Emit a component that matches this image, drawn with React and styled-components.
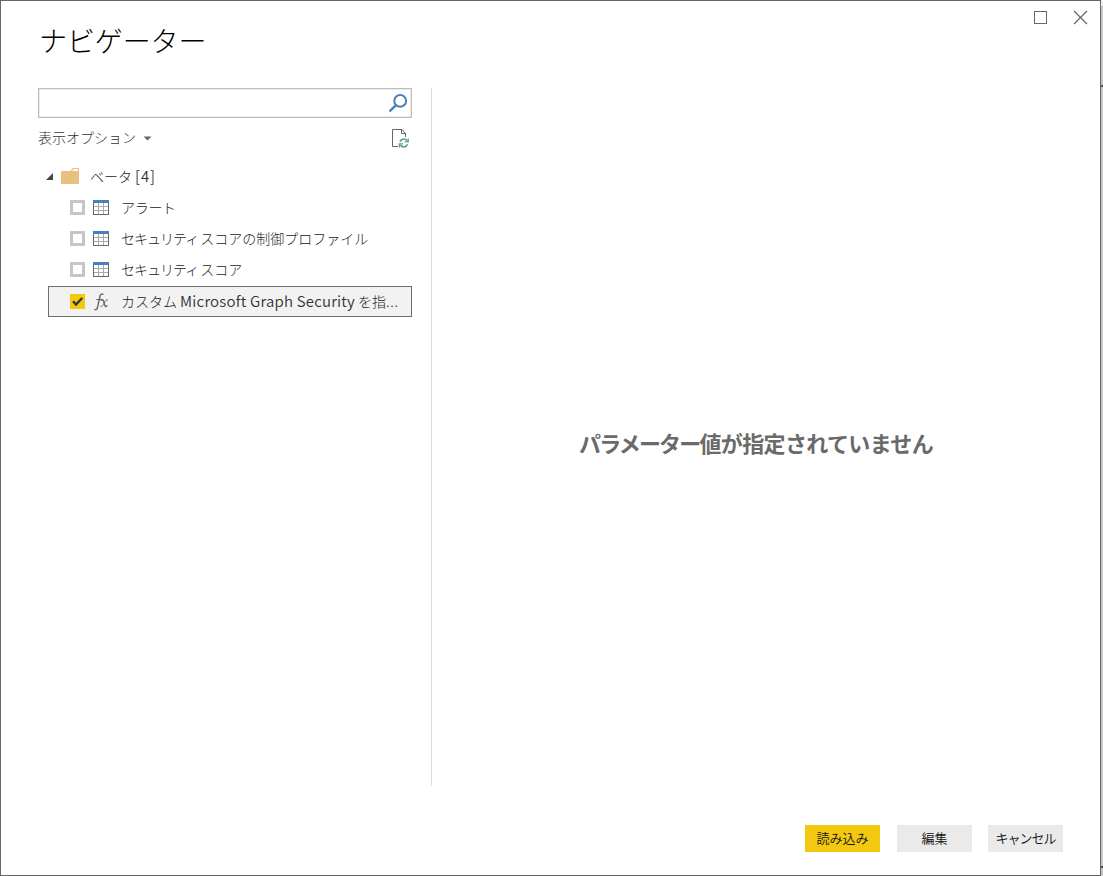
import React from "react";
import styled, { createGlobalStyle } from "styled-components";

const GlobalStyle = createGlobalStyle`
  * { box-sizing: border-box; }
  html, body { margin: 0; overflow: hidden; }
  body { font-family: "Noto Sans CJK JP", sans-serif; background: #c9c9c9; }
  svg { display: block; flex: none; }
`;

const Desktop = styled.div`
  display: flex;
  width: 1103px;
  height: 876px;
`;

const Dialog = styled.main`
  display: flex;
  flex-direction: column;
  width: 1101px;
  height: 876px;
  border: 1px solid #666;
  background: #fff;
`;

const Backdrop = styled.div`
  display: flex;
  flex-direction: column;
  width: 2px;
  background: #c6c6c6;
`;

const BackdropGap = styled.div`
  height: ${(p) => p.$h}px;
  background: ${(p) => p.$color || "transparent"};
`;

const Header = styled.header`
  display: flex;
  justify-content: space-between;
  height: 87px;
  padding: 9px 12px 0 38px;
`;

const Title = styled.h1`
  margin: 9px 0 0;
  font-size: 28px;
  font-weight: 300;
  line-height: 42px;
  letter-spacing: -0.1px;
  color: #000;
`;

const WindowControls = styled.div`
  display: flex;
  gap: 25px;
`;

const IconButton = styled.button`
  display: block;
  padding: 0;
  border: 0;
  background: none;
  height: fit-content;
`;

const Content = styled.div`
  display: flex;
  height: 698px;
  padding-left: 37px;
`;

const Sidebar = styled.aside`
  width: 374px;
  margin-right: 19px;
`;

const SearchBox = styled.div`
  display: flex;
  justify-content: flex-end;
  height: 30px;
  padding: 5px 3px 0 0;
  border: 1px solid #bcbcbc;
  box-shadow: inset 0 0 0 1px #ececec;
`;

const Options = styled.div`
  display: flex;
  align-items: center;
  height: 40px;
  margin-bottom: 3px;
  padding-right: 3px;
`;

const OptionsLabel = styled.span`
  width: 105px;
  padding-bottom: 2px;
  font-size: 14px;
  font-weight: 300;
  line-height: 20px;
  white-space: nowrap;
  color: #333;
`;

const Spacer = styled.div`
  flex: 1;
`;

const TreeRow = styled.div`
  display: flex;
  align-items: center;
  height: 31px;
  margin-top: ${(p) => (p.$selected ? 1 : 0)}px;
  margin-left: ${(p) => (p.$root ? 8 : 10)}px;
  padding-left: ${(p) => (p.$root ? 0 : 21)}px;
  border: 1px solid ${(p) => (p.$selected ? "#6e6e6e" : "transparent")};
  ${(p) => p.$root && "border-left: 0;"}
  background: ${(p) => (p.$selected ? "#f2f2f2" : "transparent")};
`;

const FolderIcon = styled.svg`
  margin: 0 0 1px 8px;
`;

const Check = styled.span`
  display: flex;
  width: 15px;
  height: 15px;
  margin-right: 8px;
  border: ${(p) => (p.$on ? "0" : "3px solid #c6c6c6")};
  background: ${(p) => (p.$on ? "#f2c811" : "#fff")};
`;

const Label = styled.span`
  margin-left: ${(p) => p.$gap}px;
  padding-bottom: 2px;
  font-size: 14px;
  font-weight: 300;
  line-height: 20px;
  white-space: pre;
  color: #222;
`;

const Tracked = styled.span`
  letter-spacing: ${(p) => p.$track}px;
`;

const Latin = styled.span`
  font-size: 15px;
  font-weight: 350;
  letter-spacing: ${(p) => p.$track}px;
  color: #333;
`;

const Divider = styled.div`
  width: 1px;
  background: #dedede;
`;

const Preview = styled.section`
  display: flex;
  flex: 1;
  justify-content: center;
  padding: 338px 20px 0 0;
`;

const Message = styled.p`
  margin: 0;
  font-size: 22px;
  font-weight: 700;
  line-height: 32px;
  letter-spacing: -0.65px;
  white-space: nowrap;
  color: #6a6a6a;
`;

const Footer = styled.footer`
  display: flex;
  justify-content: flex-end;
  padding: 39px 37px 0 0;
`;

const Button = styled.button`
  width: 75px;
  height: 27px;
  margin-left: ${(p) => p.$gap || 0}px;
  padding: 0 0 1px;
  border: 0;
  background: ${(p) => (p.$primary ? "#f2c811" : "#eaeaea")};
  font-family: "Noto Sans CJK JP", sans-serif;
  font-size: 13px;
  font-weight: 350;
  line-height: 26px;
  letter-spacing: ${(p) => p.$track || 0}px;
  white-space: nowrap;
  color: #111;
`;

const TableIcon = () => (
  <svg width="16" height="15" shapeRendering="crispEdges">
    <rect x="0.5" y="0.5" width="15" height="14" fill="#fff" stroke="#666" />
    <path d="M1 6.5H15M1 10.5H15M5.5 3V14M10.5 3V14" stroke="#aaa" fill="none" />
    <rect width="16" height="3" fill="#4a80ba" />
  </svg>
);

const FxIcon = () => (
  <svg width="16" height="20" fill="none" stroke="#666" strokeLinecap="round">
    <path d="M10 2.3C8.6 1.3 7.4 2.4 6.9 4.5L4.6 15C4.2 17.2 3.1 18.2 1.8 17.5" strokeWidth="1.4" />
    <path d="M3.6 7.5H9" strokeWidth="1" />
    <path d="M8.4 8.2C9.8 7.2 10.5 8.3 10.9 10L11.7 13.2C12.1 14.8 12.9 15 14 13.8" strokeWidth="1.4" />
    <path d="M14.6 7.9C13.4 7.3 12.5 8.7 11.3 10.9S9 15.2 7.8 14.4" strokeWidth="1" />
  </svg>
);

const tables = [
  { head: "アラート", tail: "", track: -0.3 },
  { head: "セキュリティ ", tail: "スコアの制御プロファイル", track: -1 },
  { head: "セキュリティ ", tail: "スコア", track: -1 },
];

export default function App() {
  return (
    <Desktop>
      <GlobalStyle />
      <Dialog>
        <Header>
          <Title>ナビゲーター</Title>
          <WindowControls>
            <IconButton aria-label="最大化">
              <svg width="15" height="15" fill="none" stroke="#666">
                <rect x="1.5" y="1.5" width="12" height="12" />
              </svg>
            </IconButton>
            <IconButton aria-label="閉じる">
              <svg width="15" height="15" fill="none" stroke="#666" strokeWidth="1.2">
                <path d="M1 1L14 14M14 1L1 14" />
              </svg>
            </IconButton>
          </WindowControls>
        </Header>
        <Content>
          <Sidebar>
            <SearchBox>
              <IconButton aria-label="検索">
                <svg width="20" height="19" fill="none" stroke="#4a80ba" strokeWidth="2">
                  <circle cx="12.2" cy="6.9" r="5.9" />
                  <path d="M8 11.2L1.5 17.4" strokeWidth="2.4" />
                </svg>
              </IconButton>
            </SearchBox>
            <Options>
              <OptionsLabel>表示オプション</OptionsLabel>
              <svg width="9" height="5"><path d="M0.5 0.5H8.5L4.5 4.5Z" fill="#666" /></svg>
              <Spacer />
              <svg width="17" height="20" fill="none">
                <path d="M6 18.5H0.5V1.5H10L13.5 5.5V9M9.5 1.5V5.5H13.5" stroke="#666" />
                <g stroke="#5ba582" strokeWidth="1.7">
                  <path d="M8 13.7A4 4 0 0 1 15.1 12.8M15.5 16.2A4 4 0 0 1 8.4 17" />
                  <path d="M16.2 10.5V13.9H12.8M7.4 19.5V15.9H10.9" strokeWidth="1.4" />
                </g>
              </svg>
            </Options>
            <TreeRow $root>
              <svg width="7" height="7"><path d="M7 0V7H0Z" fill="#444" /></svg>
              <FolderIcon width="18" height="16">
                <path d="M0 3H9L12 0H18V16H0Z" fill="#e8c17f" />
                <path d="M11 3L13 1H17V3Z" fill="#fff" />
              </FolderIcon>
              <Label $gap={11}>ベータ <Latin $track={0.9}>[4]</Latin></Label>
            </TreeRow>
            {tables.map((t) => (
              <TreeRow key={t.head + t.tail}>
                <Check />
                <TableIcon />
                <Label $gap={12}><Tracked $track={t.track}>{t.head}</Tracked>{t.tail}</Label>
              </TreeRow>
            ))}
            <TreeRow $selected>
              <Check $on>
                <svg width="15" height="15" fill="none" stroke="#333" strokeWidth="2.3">
                  <path d="M3 7.2L6 10.6L12.2 4" />
                </svg>
              </Check>
              <FxIcon />
              <Label $gap={12}>カスタム <Latin $track={0.2}>Microsoft Graph Security</Latin> を指<Tracked $track={0.7}>...</Tracked></Label>
            </TreeRow>
          </Sidebar>
          <Divider />
          <Preview>
            <Message><Tracked $track={-1.8}>パラメーター</Tracked>値が指定されていません</Message>
          </Preview>
        </Content>
        <Footer>
          <Button $primary>読み込み</Button>
          <Button $gap={17}>編集</Button>
          <Button $gap={16} $track={-1}>キャンセル</Button>
        </Footer>
      </Dialog>
      <Backdrop>
        <BackdropGap $h={6} $color="#f4f4f4" />
        <BackdropGap $h={79} />
        <BackdropGap $h={2} $color="#555" />
        <BackdropGap $h={779} />
        <BackdropGap $h={2} $color="#555" />
      </Backdrop>
    </Desktop>
  );
}
